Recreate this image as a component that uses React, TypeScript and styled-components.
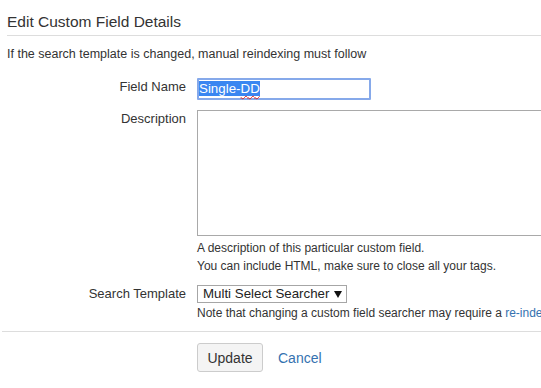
import React from "react";
import styled, { createGlobalStyle } from "styled-components";

const GlobalStyle = createGlobalStyle`
  html, body {
    margin: 0;
    padding: 0;
    background: #ffffff;
    overflow: hidden;
  }
  body {
    font-family: "Liberation Sans", Arial, sans-serif;
    color: #333333;
  }
`;

const Page = styled.div`
  width: 541px;
  height: 388px;
  overflow: hidden;
`;

const Header = styled.div`
  margin-left: 7px;
  padding-top: 12px;
  padding-bottom: 3px;
  border-bottom: 1px solid #dddddd;
`;

const Title = styled.h2`
  margin: 0;
  font-size: 15.5px;
  line-height: 20px;
  font-weight: normal;
  color: #333333;
`;

const Intro = styled.p`
  margin: 9px 0 0 7px;
  font-size: 12.5px;
  line-height: 18px;
  white-space: nowrap;
`;

const Form = styled.div`
  margin: 15px 0 0 7px;
  display: flex;
  flex-direction: column;
`;

const Row = styled.div<{ $gap?: number }>`
  display: grid;
  grid-template-columns: 179px 520px;
  column-gap: 11px;
  margin-top: ${(p) => p.$gap ?? 0}px;
`;

const Label = styled.label`
  font-size: 13px;
  line-height: 18px;
  text-align: right;
  white-space: nowrap;
  color: #333333;
`;

const Field = styled.div`
  display: flex;
  flex-direction: column;
  align-items: flex-start;
`;

const TextInput = styled.div`
  box-sizing: border-box;
  width: 174px;
  height: 22px;
  border: 2px solid #86a9ea;
  border-radius: 1px;
  padding: 1px 0 0 0;
  font-size: 13.33px;
  line-height: 15px;
  background: #ffffff;
`;

const Selected = styled.span`
  background: #3a86f1;
  color: #ffffff;
`;

const Misspelled = styled.span`
  text-decoration: underline wavy #e02020;
  text-decoration-thickness: 1px;
  text-underline-offset: 2px;
`;

const TextArea = styled.div`
  box-sizing: border-box;
  width: 520px;
  height: 126px;
  border: 1px solid #a9a9a9;
  background: #ffffff;
`;

const Help = styled.div<{ $top?: number }>`
  margin-top: ${(p) => p.$top ?? 0}px;
  font-size: 12px;
  line-height: 18px;
  white-space: nowrap;
  color: #333333;
`;

const Link = styled.a`
  color: #3572b0;
  text-decoration: none;
`;

const Select = styled.div`
  box-sizing: border-box;
  width: 150px;
  height: 18px;
  border: 1px solid #a6a6a6;
  padding: 0 4px 0 5px;
  display: flex;
  align-items: center;
  justify-content: space-between;
  white-space: nowrap;
  font-size: 13.3px;
  line-height: 16px;
  color: #222222;
  background: #ffffff;
`;

const Arrow = styled.svg`
  flex: none;
  margin-left: 4px;
`;

const Divider = styled.div`
  margin: 9px 0 0 2px;
  border-top: 1px solid #dddddd;
`;

const Actions = styled.div`
  margin: 11px 0 0 197px;
  display: flex;
  align-items: center;
  gap: 15px;
`;

const Button = styled.button`
  box-sizing: border-box;
  width: 66px;
  height: 29px;
  padding: 0;
  border: 1px solid #cccccc;
  border-radius: 3px;
  background: #f4f4f4;
  font-family: "Liberation Sans", Arial, sans-serif;
  font-size: 14px;
  color: #333333;
`;

const CancelLink = styled.a`
  font-size: 14px;
  color: #3572b0;
  text-decoration: none;
`;

export default function App() {
  return (
    <Page>
      <GlobalStyle />
      <Header>
        <Title>Edit Custom Field Details</Title>
      </Header>
      <Intro>If the search template is changed, manual reindexing must follow</Intro>
      <Form>
        <Row>
          <Label>Field Name</Label>
          <Field>
            <TextInput>
              <Selected>
                Single-<Misspelled>DD</Misspelled>
              </Selected>
            </TextInput>
          </Field>
        </Row>
        <Row $gap={10}>
          <Label>Description</Label>
          <Field>
            <TextArea />
            <Help $top={3}>
              A description of this particular custom field.
              <br />
              You can include HTML, make sure to close all your tags.
            </Help>
          </Field>
        </Row>
        <Row $gap={10}>
          <Label>Search Template</Label>
          <Field>
            <Select>
              <span>Multi Select Searcher</span>
              <Arrow width="8" height="7" viewBox="0 0 8 7">
                <polygon points="0,0 8,0 4,7" fill="#111111" />
              </Arrow>
            </Select>
            <Help $top={1}>
              Note that changing a custom field searcher may require a{" "}
              <Link>re-index</Link>
            </Help>
          </Field>
        </Row>
      </Form>
      <Divider />
      <Actions>
        <Button>Update</Button>
        <CancelLink>Cancel</CancelLink>
      </Actions>
    </Page>
  );
}
